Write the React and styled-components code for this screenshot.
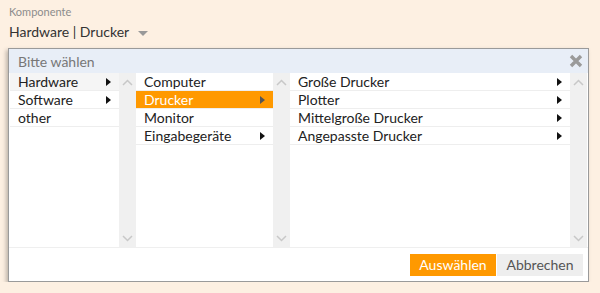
import styled, { createGlobalStyle } from "styled-components";

const GlobalStyle = createGlobalStyle`
  html, body {
    margin: 0;
    padding: 0;
    background: #fdf0e2;
    font-family: Lato, "Open Sans", sans-serif;
  }
`;

const Page = styled.div`
  padding: 5px 11px 0 8px;
`;

const FieldLabel = styled.div`
  font-size: 11px;
  color: #8c8c8c;
  line-height: 14px;
  padding-left: 1px;
`;

const FieldValue = styled.div`
  display: flex;
  align-items: center;
  gap: 9px;
  font-size: 14px;
  color: #333;
  line-height: 18px;
  margin-top: 4px;
  padding-left: 1px;
`;

const Caret = styled.span`
  width: 0;
  height: 0;
  border-left: 5px solid transparent;
  border-right: 5px solid transparent;
  border-top: 5px solid #999;
  margin-top: 2px;
`;

const Dialog = styled.div`
  margin-top: 7px;
  height: 232px;
  background: #fff;
  border: 1px solid #9a9a9a;
  box-shadow: -2px 2px 4px rgba(0, 0, 0, 0.25);
  display: flex;
  flex-direction: column;
`;

const Header = styled.div`
  height: 24px;
  background: #e8eef7;
  display: flex;
  align-items: center;
  justify-content: space-between;
  padding: 0 5px 0 9px;
  font-size: 14px;
  color: #777;
`;

const Close = styled.svg`
  width: 14px;
  height: 14px;
`;

const Columns = styled.div`
  flex: 1;
  display: grid;
  grid-template-columns: 109px 17px 137px 17px 1fr 17px;
  padding: 0 1px 0 1px;
  border-bottom: 1px solid #efefef;
`;

const List = styled.div`
  display: flex;
  flex-direction: column;
`;

const Row = styled.div`
  height: 17px;
  border-bottom: 1px solid #eeeeee;
  display: flex;
  align-items: center;
  justify-content: space-between;
  padding: 0 8px 0 8px;
  font-size: 14px;
  color: ${(p) => (p.$selected ? "#fff" : "#222")};
  background: ${(p) => (p.$selected ? "#ff9900" : p.$active ? "#f5f5f5" : "#fff")};
`;

const Arrow = styled.span`
  width: 0;
  height: 0;
  border-top: 4px solid transparent;
  border-bottom: 4px solid transparent;
  border-left: 5px solid ${(p) => (p.$light ? "#555" : "#111")};
`;

const Scroll = styled.div`
  background: #f0f0f0;
  display: flex;
  flex-direction: column;
  justify-content: space-between;
  align-items: center;
  padding: 6px 0 5px;
`;

const Chevron = styled.svg`
  width: 11px;
  height: 7px;
`;

const Footer = styled.div`
  height: 33px;
  display: flex;
  justify-content: flex-end;
  align-items: center;
  padding-right: 5px;
`;

const Button = styled.button`
  height: 22px;
  width: 86px;
  border: none;
  font-family: inherit;
  font-size: 14px;
  padding: 0;
  color: ${(p) => (p.$primary ? "#fff" : "#555")};
  background: ${(p) => (p.$primary ? "#ff9900" : "#eeeeee")};
  margin-left: 1px;
`;

const Up = () => (
  <Chevron viewBox="0 0 11 7">
    <path d="M1 6 L5.5 1.5 L10 6" fill="none" stroke="#c8c8c8" strokeWidth="1.5" />
  </Chevron>
);

const Down = () => (
  <Chevron viewBox="0 0 11 7">
    <path d="M1 1 L5.5 5.5 L10 1" fill="none" stroke="#c8c8c8" strokeWidth="1.5" />
  </Chevron>
);

const ScrollBar = () => (
  <Scroll>
    <Up />
    <Down />
  </Scroll>
);

const col1 = [
  { label: "Hardware", sub: true, active: true },
  { label: "Software", sub: true },
  { label: "other" },
];

const col2 = [
  { label: "Computer" },
  { label: "Drucker", sub: true, selected: true },
  { label: "Monitor" },
  { label: "Eingabegeräte", sub: true },
];

const col3 = [
  { label: "Große Drucker", sub: true },
  { label: "Plotter", sub: true },
  { label: "Mittelgroße Drucker", sub: true },
  { label: "Angepasste Drucker", sub: true },
];

const Column = ({ items }) => (
  <List>
    {items.map((it) => (
      <Row key={it.label} $selected={it.selected} $active={it.active}>
        <span>{it.label}</span>
        {it.sub && <Arrow $light={it.selected} />}
      </Row>
    ))}
  </List>
);

const App = () => (
  <>
    <GlobalStyle />
    <Page>
      <FieldLabel>Komponente</FieldLabel>
      <FieldValue>
        <span>Hardware | Drucker</span>
        <Caret />
      </FieldValue>
      <Dialog>
        <Header>
          <span>Bitte wählen</span>
          <Close viewBox="0 0 14 14">
            <path d="M2 2 L12 12 M12 2 L2 12" stroke="#9a9a9a" strokeWidth="3.4" />
          </Close>
        </Header>
        <Columns>
          <Column items={col1} />
          <ScrollBar />
          <Column items={col2} />
          <ScrollBar />
          <Column items={col3} />
          <ScrollBar />
        </Columns>
        <Footer>
          <Button $primary>Auswählen</Button>
          <Button>Abbrechen</Button>
        </Footer>
      </Dialog>
    </Page>
  </>
);

export default App;
